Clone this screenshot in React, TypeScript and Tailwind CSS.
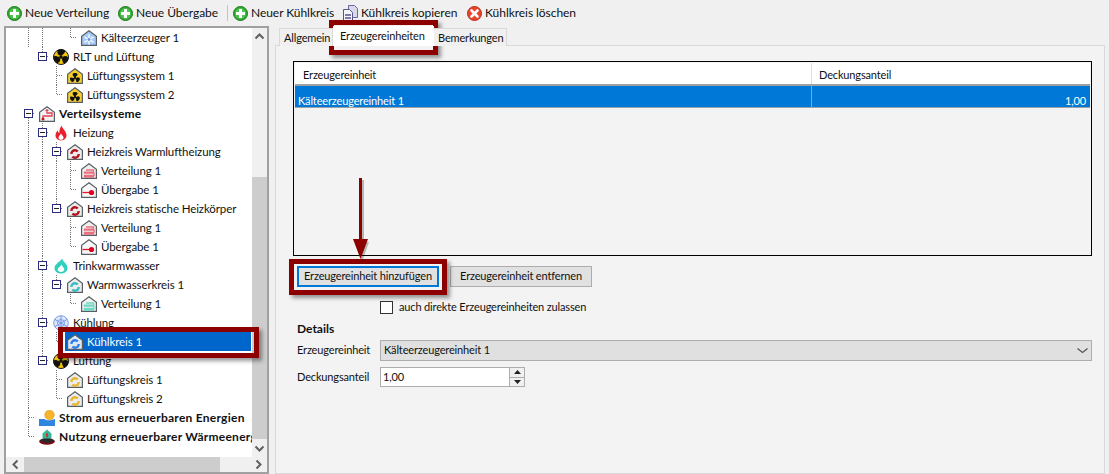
import type { ReactNode } from "react";

const RED = "border-[#8c0000]";

const PlusIcon = () => (
  <svg width="15" height="15" viewBox="0 0 15 15" className="shrink-0">
    <circle cx="7.5" cy="7.5" r="7" fill="#2fa52f" stroke="#1d7d1d" />
    <circle cx="7.5" cy="7.5" r="5.5" fill="#4cc24c" />
    <path d="M6 3h3v3h3v3H9v3H6V9H3V6h3z" fill="#fff" />
  </svg>
);

const CopyIcon = () => (
  <svg width="15" height="16" viewBox="0 0 15 16" className="shrink-0">
    <path d="M5.5.5h6l3 3v9h-9z" fill="#d8d8ea" stroke="#6a6a98" />
    <path d="M.5 4.500h6l3 3v8h-9z" fill="#f4f4fa" stroke="#56568a" />
    <path d="M2 9h6v2H2zM2 12h6v2H2z" fill="#7c7cac" />
  </svg>
);

const DeleteIcon = () => (
  <svg width="15" height="15" viewBox="0 0 15 15" className="shrink-0">
    <circle cx="7.5" cy="7.5" r="7" fill="#e8432a" stroke="#b8321c" />
    <path d="M4.500 4.500l6 6M10.500 4.500l-6 6" stroke="#fff" strokeWidth="2.6" strokeLinecap="round" />
  </svg>
);

const House = ({ fill = "#f0f0f0", children }: { fill?: string; children?: ReactNode }) => (
  <svg width="16" height="16" viewBox="0 0 16 16" className="shrink-0">
    <path d="M8 .8 15.400 6.200V15.400H.6V6.200z" fill={fill} stroke="#566064" strokeWidth="1.200" />
    {children}
  </svg>
);

const Blades = ({ cx, cy, r }: { cx: number; cy: number; r: number }) => (
  <g transform={`translate(${cx} ${cy}) scale(${r / 7})`} fill="#111">
    <circle r="1.600" />
    {[0, 120, 240].map((a) => (
      <path key={a} transform={`rotate(${a})`} d="M-1-1.400C-4-2.600-4-6-1.800-6.900 1-7.600 3.800-6.600 3.800-5 3.200-3.200 1.400-2.400 1-1.400z" />
    ))}
  </g>
);

const FanIcon = () => (
  <svg width="16" height="16" viewBox="0 0 16 16" className="shrink-0">
    <circle cx="8" cy="8" r="7.500" fill="#f2c40c" stroke="#1a1a1a" />
    <Blades cx={8} cy={8} r={7.500} />
  </svg>
);

const FanHouse = () => (
  <House fill="#f5ce2e">
    <Blades cx={8} cy={10} r={5} />
  </House>
);

const SnowHouse = () => (
  <House fill="#a9c9f7">
    <path d="M8 4.500v10M3.500 7l9 5.200M12.500 7l-9 5.200" stroke="#fff" strokeWidth="1.300" />
    <circle cx="8" cy="9.500" r="1.400" fill="#5f93ee" />
  </House>
);

const RingHouse = ({ color, inner }: { color: string; inner?: string }) => (
  <House fill={inner ?? "#ececec"}>
    <circle cx="8" cy="10" r="3.700" fill="none" stroke={color} strokeWidth="2.400" strokeDasharray="8.500 3" />
  </House>
);

const SupplyHouse = ({ color }: { color: string }) => (
  <House>
    <path d="M5 7h7.500v2.200H3.500v1H13v2.300H3.500v1.500H13" fill="none" stroke={color} strokeWidth="1.300" />
  </House>
);

const HandoverHouse = () => (
  <House fill="#f8f8f8">
    <path d="M1.500 10.500H9" stroke="#e0182d" strokeWidth="1.300" />
    <circle cx="10.500" cy="10.500" r="2.600" fill="#e0001a" />
  </House>
);

const PipeHouse = () => (
  <House fill="#f2f2f2">
    <path d="M8 4.500V7H13V10H4v3" fill="none" stroke="#e2435a" strokeWidth="1.300" />
    <path d="M8 2.800l2 2.200H6z" fill="#e2435a" />
    <circle cx="4" cy="13" r="1.500" fill="#c80f22" />
  </House>
);

const FlameIcon = () => (
  <svg width="16" height="16" viewBox="0 0 16 16" className="shrink-0">
    <path
      d="M8.600.5C9 3.500 13.500 6 13.500 10.300 13.500 13.500 11 15.500 8 15.500S2.500 13.500 2.500 10.300C2.500 8 3.800 6.500 4.800 5.500 5 7 5.600 7.800 6.300 8 6.300 5.500 6.800 3 8.600.5z"
      fill="#e8202c"
    />
    <path d="M8 8.500c.4 1.500 2.500 2.500 2.500 4.200 0 1.300-1.100 2.100-2.500 2.100s-2.500-.8-2.500-2.100c0-1.700 2-2.700 2.500-4.200z" fill="#fff" />
  </svg>
);

const DropIcon = () => (
  <svg width="16" height="16" viewBox="0 0 16 16" className="shrink-0">
    <path d="M9 .5c.5 3 5.500 5 5.500 9.500 0 3.300-2.800 5.500-6.500 5.500S1.500 13.300 1.500 10C1.500 6 7 4 9 .5z" fill="#2fd0bd" />
    <path d="M8.500 6.500c1 2.500 2.800 3.300 2.800 5.100 0 1.500-1.500 2.400-3.300 2.400-1.900 0-3.300-.9-3.300-2.400 0-2 2.800-2.700 3.800-5.100z" fill="#fff" />
  </svg>
);

const SnowIcon = () => (
  <svg width="16" height="16" viewBox="0 0 16 16" className="shrink-0">
    <circle cx="8" cy="8" r="7.300" fill="#dfe8fb" stroke="#7c9eea" />
    <path d="M8 1v14M2 4.500l12 7M14 4.500l-12 7" stroke="#6f93e6" />
    <circle cx="8" cy="8" r="3.500" fill="none" stroke="#7c9eea" />
  </svg>
);

const SunIcon = () => (
  <svg width="16" height="16" viewBox="0 0 16 16" className="shrink-0">
    <circle cx="10.500" cy="5" r="4.800" fill="#f6b52c" stroke="#e69a1c" strokeWidth=".6" />
    <path d="M0 9h5.500c2 1.700 5 1.700 10.500 0v7H0z" fill="#2e86e0" />
  </svg>
);

const UseIcon = () => (
  <svg width="16" height="16" viewBox="0 0 16 16" className="shrink-0">
    <ellipse cx="8" cy="12.500" rx="7.800" ry="3.300" fill="#7c0c12" />
    <path d="M.4 11.500 8 7.500l7.600 4-7.600 3z" fill="#2a2a2a" />
    <path d="M8 .5l4.500 4v5h-9v-5z" fill="#35b89c" />
    <path d="M8 3.500c1.500 1.500 1.800 3 .2 5.500C6.500 7 6.500 5 8 3.500z" fill="#e02a2a" />
  </svg>
);

type Row = {
  label: string;
  icon: ReactNode;
  level: number;
  guides: number[];
  node?: "box" | "line";
  open?: "mid" | "end" | "start";
  bold?: boolean;
  selected?: boolean;
};

const rows: Row[] = [
  { label: "Kälteerzeuger 1", icon: <SnowHouse />, level: 3, guides: [0, 1], node: "line", open: "end" },
  { label: "RLT und Lüftung", icon: <FanIcon />, level: 1, guides: [], node: "box", open: "end" },
  { label: "Lüftungssystem 1", icon: <FanHouse />, level: 2, guides: [], node: "line", open: "mid" },
  { label: "Lüftungssystem 2", icon: <FanHouse />, level: 2, guides: [], node: "line", open: "end" },
  { label: "Verteilsysteme", icon: <PipeHouse />, level: 0, guides: [], node: "box", open: "start", bold: true },
  { label: "Heizung", icon: <FlameIcon />, level: 1, guides: [0], node: "box", open: "mid" },
  { label: "Heizkreis Warmluftheizung", icon: <RingHouse color="#b5121f" />, level: 2, guides: [0, 1], node: "box", open: "mid" },
  { label: "Verteilung 1", icon: <SupplyHouse color="#e8707f" />, level: 3, guides: [0, 1, 2], node: "line", open: "mid" },
  { label: "Übergabe 1", icon: <HandoverHouse />, level: 3, guides: [0, 1, 2], node: "line", open: "end" },
  { label: "Heizkreis statische Heizkörper", icon: <RingHouse color="#b5121f" />, level: 2, guides: [0, 1], node: "box", open: "end" },
  { label: "Verteilung 1", icon: <SupplyHouse color="#e8707f" />, level: 3, guides: [0, 1], node: "line", open: "mid" },
  { label: "Übergabe 1", icon: <HandoverHouse />, level: 3, guides: [0, 1], node: "line", open: "end" },
  { label: "Trinkwarmwasser", icon: <DropIcon />, level: 1, guides: [0], node: "box", open: "mid" },
  { label: "Warmwasserkreis 1", icon: <RingHouse color="#35bcc4" />, level: 2, guides: [0, 1], node: "box", open: "end" },
  { label: "Verteilung 1", icon: <SupplyHouse color="#6fd8c4" />, level: 3, guides: [0, 1], node: "line", open: "end" },
  { label: "Kühlung", icon: <SnowIcon />, level: 1, guides: [0], node: "box", open: "mid" },
  { label: "Kühlkreis 1", icon: <RingHouse color="#2f7de8" inner="#dfe8f5" />, level: 2, guides: [0, 1], node: "line", open: "end", selected: true },
  { label: "Lüftung", icon: <FanIcon />, level: 1, guides: [0], node: "box", open: "end" },
  { label: "Lüftungskreis 1", icon: <RingHouse color="#e8b52c" />, level: 2, guides: [0], node: "line", open: "mid" },
  { label: "Lüftungskreis 2", icon: <RingHouse color="#e8b52c" />, level: 2, guides: [0], node: "line", open: "end" },
  { label: "Strom aus erneuerbaren Energien", icon: <SunIcon />, level: 0, guides: [], node: "line", open: "mid", bold: true },
  { label: "Nutzung erneuerbarer Wärmeenergie", icon: <UseIcon />, level: 0, guides: [], node: "line", open: "end", bold: true },
];

// one 14px indent column of the tree, with its dotted lines
const TreeCell = ({ vertical, row }: { vertical: boolean; row?: Row }) => {
  const top = row?.open !== "start";
  const bottom = row?.open === "mid" || row?.open === "start";
  return (
    <svg width="14" height="19" viewBox="0 0 14 19" className="shrink-0">
      {vertical && <path d="M7.500 0V19" stroke="#777" strokeDasharray="1 1" />}
      {row && top && <path d="M7.500 0V9.500" stroke="#777" strokeDasharray="1 1" />}
      {row && bottom && <path d="M7.500 10V19" stroke="#777" strokeDasharray="1 1" />}
      {row && <path d="M8 9.500H16" stroke="#777" strokeDasharray="1 1" />}
      {row?.node === "box" && (
        <g>
          <rect x="3.500" y="5.500" width="8" height="8" fill="#fff" stroke="#2b2b80" />
          <path d="M5 9.500H10" stroke="#222" />
        </g>
      )}
    </svg>
  );
};

const TreeRow = ({ row }: { row: Row }) => (
  <div className="flex h-[19px] shrink-0 items-center whitespace-nowrap">
    {Array.from({ length: row.level }, (_, col) => (
      <TreeCell key={col} vertical={row.guides.includes(col)} />
    ))}
    <TreeCell vertical={false} row={row} />
    <div className={`ml-[2px] flex h-[19px] items-center pl-[2px] ${row.selected ? "w-[186px] bg-[#0066cc] text-white" : ""}`}>
      {row.icon}
      <span className={`ml-[4px] ${row.bold ? "text-[12px] font-bold tracking-[0.25px]" : ""}`}>{row.label}</span>
    </div>
  </div>
);

const Chevron = ({ d }: { d: string }) => (
  <svg width="11" height="11" viewBox="0 0 11 11">
    <path d={d} fill="none" stroke="#606060" strokeWidth="2" />
  </svg>
);

const Tree = () => (
  <div className="flex h-[448px] w-[265px] shrink-0 flex-col border-2 border-[#a0a0a0] bg-white text-[11.5px] tracking-[-0.1px]">
    <div className="flex min-h-0 flex-1">
      <div className="min-w-0 flex-1 overflow-hidden pl-[15px]">
        {rows.map((row, i) => (
          <TreeRow key={i} row={row} />
        ))}
      </div>
      <div className="flex w-[15px] shrink-0 flex-col bg-[#f0f0f0]">
        <div className="flex h-[17px] items-center justify-center">
          <Chevron d="M1.500 7.500 5.500 3.500l4 4" />
        </div>
        <div className="h-[132px]" />
        <div className="flex-1 bg-[#cdcdcd]" />
        <div className="flex h-[18px] items-center justify-center">
          <Chevron d="M1.500 3.500l4 4 4-4" />
        </div>
      </div>
    </div>
    <div className="flex h-[15px] shrink-0 bg-[#f0f0f0]">
      <div className="flex w-[18px] items-center justify-center">
        <Chevron d="M7.500 1.500l-4 4 4 4" />
      </div>
      <div className="w-[196px] bg-[#cdcdcd]" />
      <div className="flex flex-1 items-center justify-end pr-[3px]">
        <Chevron d="M3.500 1.500l4 4-4 4" />
      </div>
    </div>
  </div>
);

const ToolItem = ({ icon, label, className }: { icon: ReactNode; label: string; className: string }) => (
  <div className={`flex items-center whitespace-nowrap ${className}`}>
    {icon}
    <span className="ml-[3px]">{label}</span>
  </div>
);

const Toolbar = () => (
  <div className="flex h-[26px] shrink-0 items-center pl-[7px] tracking-[-0.05px]">
    <ToolItem icon={<PlusIcon />} label="Neue Verteilung" className="w-[111px]" />
    <ToolItem icon={<PlusIcon />} label="Neue Übergabe" className="w-[109px]" />
    <div className="mr-[5px] h-[16px] w-px bg-[#c4c4c4]" />
    <ToolItem icon={<PlusIcon />} label="Neuer Kühlkreis" className="w-[110px]" />
    <ToolItem icon={<CopyIcon />} label="Kühlkreis kopieren" className="w-[124px]" />
    <ToolItem icon={<DeleteIcon />} label="Kühlkreis löschen" className="w-[120px]" />
  </div>
);

const Grid = () => (
  <div className="h-[195px] w-[799px] border border-black p-px">
    <div className="flex h-[23px] border-b-2 border-[#a0a0a0] bg-white">
      <div className="flex w-[517px] items-center border-r border-[#e0e0e0] pl-[8px] pt-[3px]">Erzeugereinheit</div>
      <div className="flex flex-1 items-center pl-[7px] pt-[3px]">Deckungsanteil</div>
    </div>
    <div className="flex h-[22px] border-b border-[#a0a0a0] bg-[#0078d7] leading-[13px] text-white">
      <div className="flex w-[517px] items-end border-r border-[#a0a0a0] pl-[3px]">Kälteerzeugereinheit 1</div>
      <div className="flex flex-1 items-end justify-end pr-[4px]">1,00</div>
    </div>
  </div>
);

const Details = () => (
  <div className="h-[428px] flex-1 border border-[#d9d9d9] bg-[#f3f3f3] pl-[17px] pt-[15px]">
    <Grid />
    <div className="ml-[4px] mt-[10px] flex gap-[11px] whitespace-nowrap">
      <div className="flex h-[21px] w-[142px] items-center justify-center border-2 border-[#0078d7] bg-[#e1e1e1]">
        Erzeugereinheit hinzufügen
      </div>
      <div className="flex h-[21px] w-[142px] items-center justify-center border border-[#adadad] bg-[#e1e1e1]">
        Erzeugereinheit entfernen
      </div>
    </div>
    <div className="ml-[87px] mt-[13px] flex h-[15px] items-center">
      <div className="h-[13px] w-[13px] border border-[#333] bg-white" />
      <span className="ml-[6px]">auch direkte Erzeugereinheiten zulassen</span>
    </div>
    <div className="ml-[4px] mt-[6px] h-[16px] text-[12px] font-bold leading-[16px] tracking-normal">Details</div>
    <div className="ml-[4px] mt-[3px] flex h-[21px] items-center">
      <span className="-mt-px w-[83px]">Erzeugereinheit</span>
      <div className="flex h-[21px] w-[712px] items-center justify-between border border-[#adadad] bg-[#e0e0e0] pl-[3px] pr-[3px]">
        Kälteerzeugereinheit 1
        <svg width="11" height="11" viewBox="0 0 11 11">
          <path d="M.5 3.500l5 4 5-4" fill="none" stroke="#555" strokeWidth="1.300" />
        </svg>
      </div>
    </div>
    <div className="ml-[4px] mt-[6px] flex h-[20px] items-center">
      <span className="w-[83px]">Deckungsanteil</span>
      <div className="flex h-[20px] w-[145px] items-center justify-between border border-[#adadad] bg-white pl-[2px]">
        1,00
        <div className="flex h-full w-[15px] flex-col border-l border-[#adadad] bg-[#f0f0f0]">
          <div className="flex flex-1 items-center justify-center border-b border-[#adadad]">
            <svg width="7" height="4" viewBox="0 0 7 4"><path d="M3.500 0l3.500 4H0z" fill="#222" /></svg>
          </div>
          <div className="flex flex-1 items-center justify-center">
            <svg width="7" height="4" viewBox="0 0 7 4"><path d="M0 0h7L3.500 4z" fill="#222" /></svg>
          </div>
        </div>
      </div>
    </div>
  </div>
);

const Tabs = () => (
  <div className="relative z-10 -mb-px flex h-[20px] items-end pl-[4px]">
    <div className="flex h-[18px] w-[54px] items-center border border-b-0 border-[#d9d9d9] bg-[#f0f0f0] pl-[4px] pt-[2px]">Allgemein</div>
    <div className="flex h-[20px] w-[101px] items-center bg-white pl-[7px] pt-[1px]">Erzeugereinheiten</div>
    <div className="flex h-[18px] w-[73px] items-center border border-b-0 border-l-0 border-[#d9d9d9] bg-[#f0f0f0] pl-[4px] pt-[2px]">Bemerkungen</div>
  </div>
);

export default function App() {
  return (
    <div className="relative flex h-[474px] w-[1109px] flex-col overflow-hidden bg-[#f0f0f0] font-['Lato',sans-serif] text-[12px] text-[#111]">
      <Toolbar />
      <div className="flex min-h-0 flex-1 pl-[4px]">
        <Tree />
        <div className="ml-[6px] flex w-[830px] flex-col text-[11px] tracking-[-0.15px]">
          <Tabs />
          <Details />
        </div>
      </div>

      {/* red callouts drawn over the screenshot */}
      <div className={`absolute left-[329px] top-[20px] h-[35px] w-[109px] border-[5px] ${RED} shadow-[3px_3px_4px_rgba(0,0,0,0.4)]`} />
      <div className={`absolute left-[289px] top-[259px] h-[36px] w-[158px] border-[5px] ${RED} shadow-[3px_3px_4px_rgba(0,0,0,0.4)]`} />
      <div className={`absolute left-[58px] top-[327px] h-[31px] w-[201px] border-[5px] ${RED} shadow-[3px_3px_4px_rgba(0,0,0,0.4)]`} />
      <svg width="24" height="90" viewBox="0 0 24 90" className="absolute left-[350px] top-[175px]">
        <path d="M11 5h3v62h5l-7 20-7-20h6z" fill="#000" opacity=".25" />
        <path d="M9 3h3v61h6l-7.500 20L3 64h6z" fill="#8c0000" />
      </svg>
    </div>
  );
}
